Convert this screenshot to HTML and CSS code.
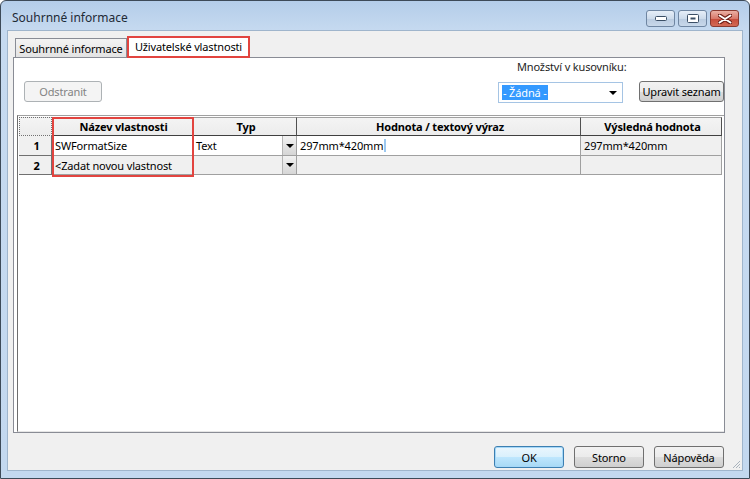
FILE: index.html
```html
<!DOCTYPE html>
<html lang="cs">
<head>
    <meta charset="UTF-8">
    <meta name="viewport" content="width=device-width, initial-scale=1.0">
    <title>Souhrnné informace</title>
    <link rel="stylesheet" href="styles.css">
</head>
<body>

<div class="window">
    <div class="titlebar">
        <span class="title">Souhrnné informace</span>
        <div class="caption-buttons">
            <span class="cap cap-min">
                <svg width="12" height="6" viewBox="0 0 12 6"><rect x="0.5" y="0.5" width="11" height="4" rx="1" fill="#fff" stroke="#3b4f66"/></svg>
            </span>
            <span class="cap cap-max">
                <svg width="12" height="9" viewBox="0 0 12 9"><rect x="0.5" y="0.5" width="11" height="8" rx="1" fill="#fff" stroke="#3b4f66"/><rect x="3.5" y="3.5" width="5" height="2" fill="#3b4f66"/></svg>
            </span>
            <span class="cap cap-close">
                <svg width="14" height="10" viewBox="0 0 14 10"><path d="M1 1 L13 9 M13 1 L1 9" stroke="#6b1c14" stroke-width="4" stroke-linecap="round"/><path d="M1.5 1.5 L12.5 8.5 M12.5 1.5 L1.5 8.5" stroke="#fff" stroke-width="2" stroke-linecap="round"/></svg>
            </span>
        </div>
    </div>

    <div class="client">
        <div class="tabs">
            <div class="tab tab-summary">Souhrnné informace</div>
            <div class="tab active">Uživatelské vlastnosti</div>
        </div>

        <div class="page">
            <div class="toolbar">
                <div class="btn disabled btn-remove">Odstranit</div>
                <div class="bom">
                    <div class="bom-label">Množství v kusovníku:</div>
                    <div class="bom-row">
                        <div class="combo">
                            <span class="combo-sel">- Žádná -</span>
                            <span class="combo-arrow"></span>
                        </div>
                        <div class="btn btn-edit">Upravit seznam</div>
                    </div>
                </div>
            </div>

            <div class="grid">
                <div class="props">
                    <div class="cell head corner"></div>
                    <div class="cell head">Název vlastnosti</div>
                    <div class="cell head">Typ</div>
                    <div class="cell head">Hodnota / textový výraz</div>
                    <div class="cell head">Výsledná hodnota</div>

                    <div class="cell rowhead">1</div>
                    <div class="cell">SWFormatSize</div>
                    <div class="cell type">Text<span class="drop"></span></div>
                    <div class="cell">297mm*420mm<span class="caret"></span></div>
                    <div class="cell ro">297mm*420mm</div>

                    <div class="cell rowhead">2</div>
                    <div class="cell ro">&lt;Zadat novou vlastnost</div>
                    <div class="cell type ro"><span class="drop"></span></div>
                    <div class="cell ro"></div>
                    <div class="cell ro"></div>
                </div>
                <div class="mark"></div>
            </div>
        </div>

        <div class="actions">
            <div class="btn default">OK</div>
            <div class="btn">Storno</div>
            <div class="btn">Nápověda</div>
        </div>

        <svg class="grip" width="10" height="10" viewBox="0 0 10 10">
            <path d="M9 2 L2 9 M9 5 L5 9 M9 8 L8 9" stroke="#a9b3bd" stroke-width="1"/>
        </svg>
    </div>
</div>

</body>
</html>
```

FILE: styles.css
```css
* {
    box-sizing: border-box;
}

body {
    margin: 0;
    padding: 0;
    width: 750px;
    height: 479px;
    overflow: hidden;
    background-color: #ffffff;
    font-family: 'Noto Sans', 'Open Sans', sans-serif;
    font-size: 11px;
    letter-spacing: -0.15px;
    color: #000;
}

.window {
    width: 750px;
    height: 479px;
    border: 1px solid #3d4a58;
    border-radius: 6px 6px 0 0;
    background: linear-gradient(to bottom, #b4cde9 0px, #c6daf0 30px, #c3d8ef 100%);
    padding: 0 6px 7px 6px;
    display: flex;
    flex-direction: column;
}

.titlebar {
    height: 29px;
    display: flex;
    align-items: center;
    justify-content: space-between;
    padding: 0 4px 0 5px;
}

.title {
    font-size: 12px;
    letter-spacing: 0;
    color: #1e2a36;
    margin-top: 4px;
}

.caption-buttons {
    display: flex;
    gap: 3px;
    margin-top: 6px;
}

.cap {
    width: 29px;
    height: 17px;
    border: 1px solid #6f86a2;
    border-radius: 3px;
    display: flex;
    align-items: center;
    justify-content: center;
    background: linear-gradient(to bottom, #e6eef8 0%, #cddbeb 50%, #b9cbe0 51%, #c8d8ea 100%);
}

.cap-close {
    border-color: #8a3a30;
    background: linear-gradient(to bottom, #eab0a4 0%, #d9796a 50%, #c54a39 51%, #d36a55 100%);
}

.client {
    flex: 1;
    position: relative;
    background-color: #f0f0f0;
    border: 1px solid #9fb5cc;
    display: flex;
    flex-direction: column;
}

.tabs {
    display: flex;
    align-items: flex-end;
    height: 26px;
    padding-left: 7px;
}

.tab {
    height: 19px;
    border: 1px solid #898c95;
    border-bottom: none;
    background: linear-gradient(to bottom, #f3f3f3, #e3e3e3);
    display: flex;
    align-items: center;
    justify-content: center;
    color: #000;
}

.tab-summary {
    width: 112px;
}

.tab.active {
    width: 123px;
    height: 22px;
    margin-bottom: -1px;
    position: relative;
    background-color: #ffffff;
    background-image: none;
    border: 2px solid #e2443f;
    padding-bottom: 2px;
}

.page {
    margin-left: 5px;
    width: 712px;
    height: 376px;
    background-color: #ffffff;
    border: 1px solid #898c95;
    display: flex;
    flex-direction: column;
}

.toolbar {
    height: 57px;
    display: flex;
    justify-content: space-between;
    align-items: flex-end;
    padding: 0 0 12px 10px;
}

.btn {
    height: 21px;
    border: 1px solid #707070;
    border-radius: 3px;
    background: linear-gradient(to bottom, #f2f2f2 0%, #ebebeb 50%, #dddddd 51%, #cfcfcf 100%);
    display: flex;
    align-items: center;
    justify-content: center;
    white-space: nowrap;
    color: #000;
}

.btn.disabled {
    border-color: #adb2b5;
    background: #f4f4f4;
    color: #838383;
}

.btn-remove {
    width: 78px;
    margin-bottom: 1px;
}

.bom {
    display: flex;
    flex-direction: column;
}

.bom-label {
    padding-left: 19px;
    margin-bottom: 7px;
    color: #1e1e1e;
}

.bom-row {
    display: flex;
    align-items: flex-end;
    gap: 16px;
}

.combo {
    width: 125px;
    height: 21px;
    border: 1px solid #a5c4e4;
    background-color: #ffffff;
    display: flex;
    align-items: center;
    justify-content: space-between;
    padding: 0 5px 0 3px;
}

.combo-sel {
    background-color: #3399ff;
    color: #ffffff;
    padding: 0 1px;
    line-height: 15px;
}

.combo-arrow {
    width: 0;
    height: 0;
    border-left: 4px solid transparent;
    border-right: 4px solid transparent;
    border-top: 4px solid #000;
}

.btn-edit {
    width: 85px;
    margin-bottom: 1px;
}

.grid {
    position: relative;
    margin-left: 3px;
    width: 707px;
    flex: 1;
    border-top: 1px solid #a0a0a0;
    border-left: 1px solid #6d6d6d;
    border-bottom: 1px solid #e6e6e6;
    padding-top: 1px;
}

.props {
    display: grid;
    grid-template-columns: 34px 141px 104px 284px 141px;
    grid-template-rows: 19px 20px 19px;
}

.cell {
    border-right: 1px solid #a0a0a0;
    border-bottom: 1px solid #a0a0a0;
    display: flex;
    align-items: center;
    padding-left: 3px;
    white-space: nowrap;
    overflow: hidden;
    background-color: #ffffff;
}

.cell.head {
    justify-content: center;
    font-weight: bold;
    background: linear-gradient(to bottom, #f4f4f4, #ececec);
    border-top: 1px solid #a0a0a0;
    border-right-color: #505050;
    border-bottom-color: #404040;
}

.cell.corner {
    border: 1px dotted #707070;
    margin-left: 1px;
}

.cell.rowhead {
    justify-content: center;
    font-weight: bold;
    background-color: #f0f0f0;
    border-right-color: #707070;
    border-bottom-color: #707070;
    margin-left: 1px;
}

.cell.ro {
    background-color: #f0f0f0;
}

.cell.type {
    padding-right: 0;
}

.drop {
    margin-left: auto;
    width: 14px;
    height: 100%;
    border-left: 1px solid #b5b5b5;
    background: linear-gradient(to bottom, #f2f2f2, #d6d6d6);
    display: flex;
    align-items: center;
    justify-content: center;
}

.drop::after {
    content: '';
    width: 0;
    height: 0;
    border-left: 4px solid transparent;
    border-right: 4px solid transparent;
    border-top: 4px solid #000;
}

.caret {
    width: 2px;
    height: 13px;
    margin-left: 1px;
    background-color: #9cc8f0;
}

.mark {
    position: absolute;
    left: 34px;
    top: 1px;
    width: 142px;
    height: 60px;
    border: 2px solid #e2443f;
}

.actions {
    display: flex;
    justify-content: flex-end;
    gap: 10px;
    padding-right: 18px;
    margin-top: 13px;
}

.actions .btn {
    width: 70px;
    height: 22px;
}

.btn.default {
    border-color: #3c7fb1;
    box-shadow: inset 0 0 0 1px #a6d8f8;
    background: linear-gradient(to bottom, #eaf6fd 0%, #d9f0fc 50%, #bee6fd 51%, #a7d9f5 100%);
}

.grip {
    position: absolute;
    right: 1px;
    bottom: 1px;
}
```
